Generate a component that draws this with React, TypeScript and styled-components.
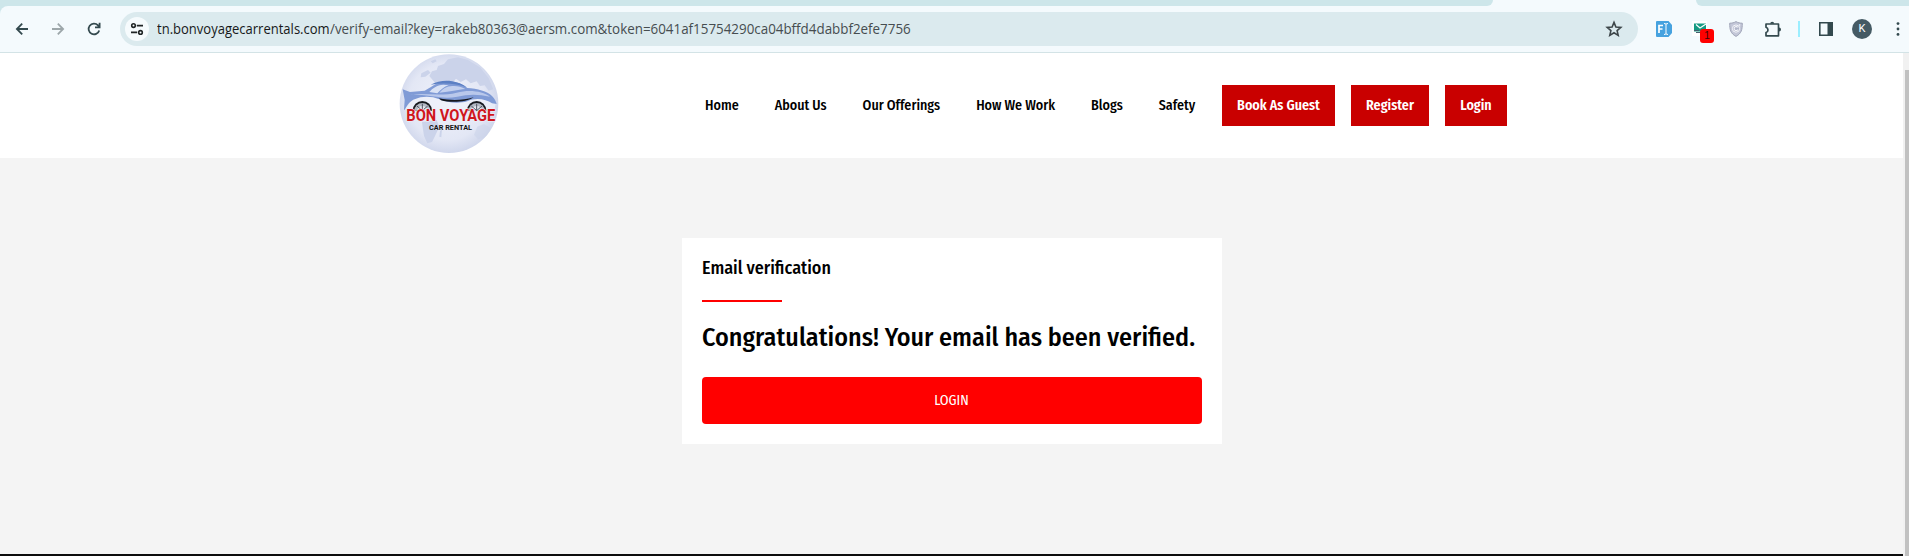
import React, { useLayoutEffect, useRef, useState } from "react";
import styled, { createGlobalStyle } from "styled-components";

const GlobalStyle = createGlobalStyle`
  *, *::before, *::after { box-sizing: border-box; }
  html, body { margin: 0; padding: 0; overflow: hidden; }
  body { font-family: "Fira Sans Condensed", "Noto Sans", sans-serif; color: #000; }
`;

const FitBox = styled.span<{ $width: number }>`
  display: block;
  flex: none;
  width: ${(p) => p.$width}px;
  white-space: pre;
`;

const FitInner = styled.span`
  display: inline-block;
  transform-origin: 0 50%;
`;

/* Scales a line of text horizontally to the width it is given. */
function FitText({ width, children }: { width: number; children: string }) {
  const ref = useRef<HTMLSpanElement>(null);
  const [scale, setScale] = useState(1);
  useLayoutEffect(() => {
    if (ref.current) setScale(width / ref.current.offsetWidth);
  }, [width, children]);
  return (
    <FitBox $width={width}>
      <FitInner ref={ref} style={{ transform: `scaleX(${scale})` }}>
        {children}
      </FitInner>
    </FitBox>
  );
}

const Screen = styled.div`
  width: 1909px;
  height: 556px;
  display: flex;
  flex-direction: column;
  overflow: hidden;
  background: #fff;
`;

const TabStrip = styled.div`
  height: 6px;
  flex: none;
  display: flex;
  background: #f4fafd;
`;

const StripPart = styled.div<{ $width: number; $side: "left" | "right" }>`
  width: ${(p) => p.$width}px;
  background: #cde6ea;
  border-radius: ${(p) => (p.$side === "left" ? "0 0 9px 0" : "0 0 0 9px")};
`;

const ActiveTab = styled.div`
  width: 203px;
`;

const ToolbarBack = styled.div`
  flex: none;
  height: 47px;
  background: #cde6ea;
`;

const Toolbar = styled.div`
  height: 47px;
  display: flex;
  align-items: center;
  background: #f4fafd;
  border-bottom: 1px solid #d3e3e6;
  border-top-left-radius: 8px;
`;

const NavIcons = styled.div`
  width: 120px;
  flex: none;
  display: flex;
  gap: 16px;
  padding-left: 12px;
`;

const AddressBar = styled.div`
  width: 1518px;
  height: 34px;
  flex: none;
  display: flex;
  align-items: center;
  padding: 0 14px 0 5px;
  border-radius: 17px;
  background: #dbeaee;
`;

const SiteInfo = styled.div`
  width: 24px;
  height: 24px;
  margin-right: 8px;
  border-radius: 50%;
  background: #f6fbfd;
`;

const Url = styled.div`
  flex: 1;
  display: flex;
  font: 14px/20px "Open Sans", "Noto Sans", sans-serif;
  color: #464d50;
`;

const UrlHost = styled.span`
  color: #17191a;
`;

const Extensions = styled.div`
  display: flex;
  align-items: center;
  padding-left: 14px;
`;

const Slot = styled.div<{ $width: number }>`
  position: relative;
  flex: none;
  width: ${(p) => p.$width}px;
  height: 24px;
  display: flex;
  justify-content: center;
  align-items: center;
`;

const Badge = styled.span`
  position: absolute;
  left: 14px;
  top: 12px;
  width: 14px;
  height: 14px;
  border-radius: 3px;
  background: #f00;
  color: #3a0606;
  font: 10px/14px "Liberation Sans", sans-serif;
  text-align: center;
`;

const Divider = styled.div`
  width: 2px;
  height: 16px;
  background: #9beeff;
`;

const Avatar = styled.div`
  width: 20px;
  height: 20px;
  border-radius: 50%;
  background: #455a64;
  color: #fff;
  font: 11px/20px Roboto, sans-serif;
  text-align: center;
`;

const Viewport = styled.div`
  flex: 1;
  min-height: 0;
  display: flex;
`;

const Page = styled.div`
  width: 1903px;
  display: flex;
  flex-direction: column;
  background: #f4f4f4;
`;

const Header = styled.header`
  height: 105px;
  flex: none;
  display: flex;
  padding-left: 398px;
  background: #fff;
`;

const Menu = styled.nav`
  width: 517px;
  flex: none;
  display: flex;
  align-items: center;
  gap: 36px;
  margin-left: 205px;
  white-space: nowrap;
  font-size: 14px;
  font-weight: 500;
  line-height: 20px;
`;

const Actions = styled.div`
  display: flex;
  align-items: center;
  gap: 16px;
`;

const ActionButton = styled.a<{ $width: number }>`
  width: ${(p) => p.$width}px;
  height: 41px;
  display: flex;
  justify-content: center;
  align-items: center;
  background: #c90000;
  color: #fff;
  white-space: nowrap;
  font-size: 14px;
  font-weight: 600;
  line-height: 21px;
`;

const Main = styled.main`
  flex: 1;
  padding: 80px 0 0 682px;
`;

const Card = styled.section`
  width: 540px;
  height: 206px;
  padding: 20px;
  display: flex;
  flex-direction: column;
  background: #fff;
`;

const CardTitle = styled.h2`
  margin: -3px 0 0;
  font-size: 18px;
  font-weight: 500;
  line-height: 26px;
`;

const Rule = styled.div`
  width: 80px;
  height: 2px;
  margin-top: 19px;
  background: #f00;
`;

const Message = styled.h1`
  margin: 18px 0 0;
  font-size: 26px;
  font-weight: 500;
  line-height: 36px;
  white-space: nowrap;
`;

const LoginButton = styled.button`
  width: 500px;
  height: 47px;
  margin-top: 21px;
  padding: 0 1px 0 0;
  flex: none;
  border: 0;
  border-radius: 4px;
  background: #f00;
  color: #fff;
  font: 400 14px/20px "Fira Sans Condensed", "Noto Sans", sans-serif;
`;

const Footer = styled.footer`
  height: 2px;
  flex: none;
  background: #0c0c0c;
`;

const Scrollbar = styled.div`
  width: 6px;
  padding: 17px 0 0 2px;
  background: #f1f1f1;
`;

const Thumb = styled.div`
  height: 100%;
  background: #c1c1c1;
`;

function Logo() {
  return (
    <svg width="102" height="105" viewBox="24 15 306 315">
      <defs>
        <radialGradient id="globe" cx="48%" cy="48%" r="52%">
          <stop offset="0" stopColor="#f0f2fb" />
          <stop offset=".75" stopColor="#e3e7f5" />
          <stop offset="1" stopColor="#d0d7ec" />
        </radialGradient>
        <clipPath id="disc">
          <circle cx="177" cy="167" r="148" />
        </clipPath>
      </defs>
      <circle cx="177" cy="167" r="148" fill="url(#globe)" />
      <g clipPath="url(#disc)" fill="#cbd3ea">
        <path d="M118 84l8-14 14-4 4-12 18-6 12-14 30-6 30 8 36 22 26 32 14 34-14 4-12-16-14 2-10-14-18 6-14-12-16 8-14-10-10 12-16-6-10 12-14-8-12 4z" />
        <path d="M94 76l20-10 8 8-16 12-14 2zM122 40l14-6 4 6-12 6z" />
        <path d="M96 222l44-6 8 20-14 30-8 16-14 4-10-22-4-26zM150 250l6-8-2 26-6-2z" />
        <path d="M262 236l20-8 20 12-12 28-26 6-12-14z" opacity=".6" />
      </g>
      <path d="M72 150l34-16 140-14 50 20 22 22-4 22H44z" fill="#edf0fa" opacity=".75" />
      <path d="M38 124l22 8 44-4c14-6 24-16 38-22 30-10 66-6 90 14 30 2 60 10 74 24 8 8 12 16 14 24l-14-2c-18-14-52-18-74-6-28 8-60 4-84-6-24-10-52-10-74 0-12 4-22 16-30 32l-2-2 2-28z" fill="#809bd6" />
      <path d="M118 132c10-12 22-20 42-22l16 2c-14 4-24 14-34 24z" fill="#d9e2f5" />
      <path d="M148 134c10-12 24-22 44-20 12 0 24 4 34 9-24 2-44 8-78 11z" fill="#c3d0ee" />
      <path d="M62 140c44-6 90 6 138-6 40-10 78-4 100 12-34-8-66-8-98 0-48 10-90-8-140-6z" fill="#b9c8eb" />
      <path d="M122 110c32-18 78-16 108 8-32-12-70-14-108-8z" fill="#5c80c4" />
      <path d="M147 151c35 7 70 7 104-3-20 15-70 17-98 9z" fill="#15171d" />
      {[97, 260].map((cx) => (
        <g key={cx}>
          <path d={`M${cx - 29} 188a29 29 0 0 1 58 0z`} fill="#17191e" />
          <path d={`M${cx - 24} 188a24 23 0 0 1 48 0z`} fill="#b4b9c4" />
          <path d={`M${cx - 15} 188a15 14 0 0 1 30 0z`} fill="#e4e7ee" />
          <path d={`M${cx} 188v-21M${cx} 188l-16-14M${cx} 188l16-14`} stroke="#4d525e" strokeWidth="3" />
        </g>
      ))}
      <text x="49" y="220" textLength="267" lengthAdjust="spacingAndGlyphs" fontFamily="Roboto, sans-serif" fontWeight="700" fontSize="47" fill="#d0161d" stroke="#eef0f8" strokeWidth="3" paintOrder="stroke">BON VOYAGE</text>
      <text x="117" y="246" textLength="129" lengthAdjust="spacingAndGlyphs" fontFamily="Roboto, sans-serif" fontWeight="700" fontSize="23" fill="#151515">CAR RENTAL</text>
    </svg>
  );
}

const BackIcon = () => (
  <svg width="20" height="20" viewBox="0 0 20 20" fill="none" stroke="#33494e" strokeWidth="1.8">
    <path d="M16 10H5M10.2 4.7L4.9 10l5.3 5.3" />
  </svg>
);
const ForwardIcon = () => (
  <svg width="20" height="20" viewBox="0 0 20 20" fill="none" stroke="#9da7aa" strokeWidth="1.8">
    <path d="M4 10h11M9.8 4.7l5.3 5.3-5.3 5.3" />
  </svg>
);
const ReloadIcon = () => (
  <svg width="20" height="20" viewBox="0 0 20 20" fill="none" stroke="#33494e" strokeWidth="1.8">
    <path d="M15.2 11.4A5.4 5.4 0 1 1 14 6.3l1.4 1.5M15.6 3.8v4.6h-4.6" />
  </svg>
);
const TuneIcon = () => (
  <svg width="24" height="24" viewBox="0 0 24 24" fill="none" stroke="#202526" strokeWidth="1.6">
    <circle cx="8.5" cy="8.6" r="1.8" />
    <path d="M11.8 8.6H18M6 15.4h6.2" />
    <circle cx="15.5" cy="15.4" r="1.8" />
  </svg>
);
const StarIcon = () => (
  <svg width="20" height="20" viewBox="0 0 20 20" fill="none" stroke="#3d4649" strokeWidth="1.6">
    <path d="M10 3.4l1.9 4.6 4.9.4-3.7 3.2 1.1 4.8L10 13.8l-4.2 2.6 1.1-4.8-3.7-3.2 4.9-.4z" />
  </svg>
);
const FormIcon = () => (
  <svg width="16" height="16" viewBox="0 0 16 16">
    <path d="M1 0h11.5L16 4v8l-3.500 4H1a1 1 0 0 1-1-1V1a1 1 0 0 1 1-1z" fill="#46a2df" />
    <path d="M3 12V4.500h4M3 8h3.500" fill="none" stroke="#fff" strokeWidth="1.700" />
    <path d="M8 2.600h1.200l.8.700.8-.7H12M10 3v10M8 13.400h1.200l.8-.7.8.7H12" fill="none" stroke="#fff" strokeWidth="1" />
  </svg>
);
const MailIcon = () => (
  <svg width="16" height="16" viewBox="0 0 16 16">
    <path d="M0 0h15v15H0z" fill="#fff" />
    <path d="M2 2.500h12v8H2z" fill="#169a82" />
    <path d="M4 3.500l4 3.500 6-4" fill="none" stroke="#fff" strokeWidth="1.200" />
    <path d="M2 9.500h5M4 11.500h4" stroke="#46606f" />
  </svg>
);
const ShieldIcon = () => (
  <svg width="14" height="16" viewBox="0 0 14 16" fill="none">
    <path d="M7 .6c2 1.200 4 1.600 6.300 1.600 0 6.500-.8 10.200-6.300 13.200C1.500 12.400.7 8.700.7 2.200 3 2.200 5 1.800 7 .6z" fill="#c3c7d8" stroke="#a0a5b8" />
    <circle cx="7" cy="7.600" r="3.600" fill="#b1b6ca" stroke="#f4f5fa" strokeWidth="1" />
    <path d="M8.700 6.400a2 2 0 1 0 .1 2.200M10 4.500l1-1" stroke="#f4f5fa" strokeWidth="1.100" />
  </svg>
);
const PuzzleIcon = () => (
  <svg width="18" height="18" viewBox="0 0 18 18">
    <path d="M2 4h12.500v11.800H2v-3.300a2.700 2.700 0 0 0 0-5.200z" fill="none" stroke="#33494e" strokeWidth="1.700" strokeLinejoin="round" />
    <path d="M6.200 3.700a2 2 0 0 1 4 0zM15 7.500a2 2 0 0 1 0 4z" fill="#33494e" />
  </svg>
);
const PanelIcon = () => (
  <svg width="14" height="14" viewBox="0 0 14 14">
    <path d="M.8.8h12.400v12.400H.8z" fill="none" stroke="#33494e" strokeWidth="1.600" />
    <path d="M8.500 1H13v12H8.500z" fill="#33494e" />
  </svg>
);
const DotsIcon = () => (
  <svg width="4" height="14" viewBox="0 0 4 14" fill="#33494e">
    <circle cx="2" cy="1.600" r="1.400" />
    <circle cx="2" cy="7" r="1.400" />
    <circle cx="2" cy="12.400" r="1.400" />
  </svg>
);

const links = ["Home", "About Us", "Our Offerings", "How We Work", "Blogs", "Safety"];

const actions: [string, number][] = [
  ["Book As Guest", 113],
  ["Register", 78],
  ["Login", 62],
];

export default function App() {
  return (
    <Screen>
      <GlobalStyle />
      <TabStrip>
        <StripPart $width={1493} $side="left" />
        <ActiveTab />
        <StripPart $width={213} $side="right" />
      </TabStrip>
      <ToolbarBack>
        <Toolbar>
          <NavIcons>
            <BackIcon />
            <ForwardIcon />
            <ReloadIcon />
          </NavIcons>
          <AddressBar>
            <SiteInfo>
              <TuneIcon />
            </SiteInfo>
            <Url>
              <UrlHost>
                <FitText width={173}>tn.bonvoyagecarrentals.com</FitText>
              </UrlHost>
              <FitText width={581}>
                /verify-email?key=rakeb80363@aersm.com&token=6041af15754290ca04bffd4dabbf2efe7756
              </FitText>
            </Url>
            <StarIcon />
          </AddressBar>
          <Extensions>
            <Slot $width={24}><FormIcon /></Slot>
            <Slot $width={10} />
            <Slot $width={28}>
              <MailIcon />
              <Badge>1</Badge>
            </Slot>
            <Slot $width={44}><ShieldIcon /></Slot>
            <Slot $width={30}><PuzzleIcon /></Slot>
            <Slot $width={22}><Divider /></Slot>
            <Slot $width={32}><PanelIcon /></Slot>
            <Slot $width={40}><Avatar>K</Avatar></Slot>
            <Slot $width={32}><DotsIcon /></Slot>
          </Extensions>
        </Toolbar>
      </ToolbarBack>
      <Viewport>
        <Page>
          <Header>
            <Logo />
            <Menu>
              {links.map((label) => (
                <span key={label}>{label}</span>
              ))}
            </Menu>
            <Actions>
              {actions.map(([label, width]) => (
                <ActionButton key={label} $width={width}>{label}</ActionButton>
              ))}
            </Actions>
          </Header>
          <Main>
            <Card>
              <CardTitle>Email verification</CardTitle>
              <Rule />
              <Message>Congratulations! Your email has been verified.</Message>
              <LoginButton>LOGIN</LoginButton>
            </Card>
          </Main>
          <Footer />
        </Page>
        <Scrollbar>
          <Thumb />
        </Scrollbar>
      </Viewport>
    </Screen>
  );
}
